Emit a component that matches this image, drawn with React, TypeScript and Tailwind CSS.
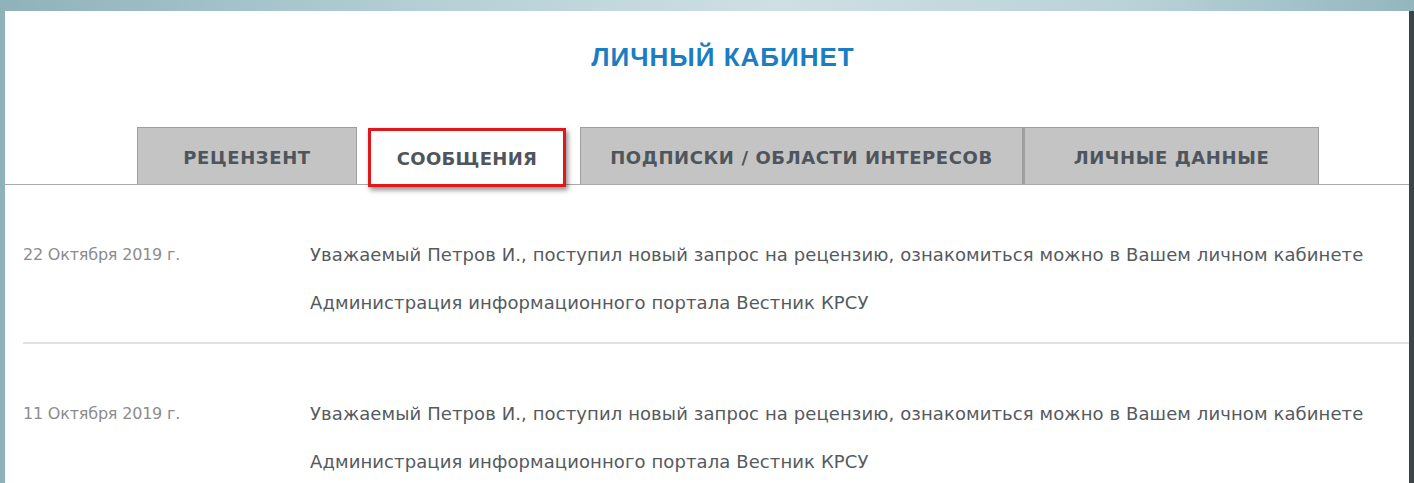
import React from "react";

const tabs = [
  { label: "РЕЦЕНЗЕНТ", width: "w-[220px]", active: false },
  { label: "СООБЩЕНИЯ", width: "w-[198px]", active: true },
  { label: "ПОДПИСКИ / ОБЛАСТИ ИНТЕРЕСОВ", width: "w-[443px]", active: false },
  { label: "ЛИЧНЫЕ ДАННЫЕ", width: "w-[296px]", active: false },
];

const messages = [
  {
    date: "22 Октября 2019 г.",
    text: "Уважаемый Петров И., поступил новый запрос на рецензию, ознакомиться можно в Вашем личном кабинете",
    sign: "Администрация информационного портала Вестник КРСУ",
  },
  {
    date: "11 Октября 2019 г.",
    text: "Уважаемый Петров И., поступил новый запрос на рецензию, ознакомиться можно в Вашем личном кабинете",
    sign: "Администрация информационного портала Вестник КРСУ",
  },
];

export default function App() {
  return (
    <div className="w-[1414px] h-[483px] overflow-hidden flex flex-col bg-[linear-gradient(90deg,#8fb2ba_0%,#b4cfd5_30%,#cde0e4_55%,#b9d2d8_80%,#93b6be_100%)]">
      <div className="h-[11px] shrink-0" />
      <div className="flex flex-1 min-h-0">
        <div className="w-[5px] shrink-0 bg-[#8fb1b9]" />
        <div className="flex-1 bg-white flex flex-col font-['DejaVu_Sans',sans-serif]">
          {/* heading */}
          <div className="h-[117px] shrink-0 flex justify-center pt-[31px] pl-[32px]">
            <h1 className="font-['Liberation_Sans',Arial,sans-serif] font-bold text-[26px] leading-[30px] text-[#1b7dc3] tracking-[1px]">
              ЛИЧНЫЙ КАБИНЕТ
            </h1>
          </div>

          {/* tabs */}
          <div className="flex items-end pl-[132px] border-b border-[#a9a9a9] h-[57px] shrink-0">
            {tabs.map((t, i) =>
              t.active ? (
                <div
                  key={t.label}
                  className={`${t.width} h-[59px] -mb-[3px] ml-[11px] mr-[14px] bg-white border-[3px] border-[#e0171b] shadow-[2px_3px_5px_rgba(0,0,0,0.45)] flex items-center justify-center pt-[2px] relative z-10`}
                >
                  <span className="font-bold text-[18px] text-[#4f555c] tracking-[0.3px]">{t.label}</span>
                </div>
              ) : (
                <div
                  key={t.label}
                  className={`${t.width} h-[57px] bg-[#c4c4c4] border border-[#9e9e9e] border-b-0 ${i === 3 ? "border-l-[2px]" : ""} flex items-center justify-center pt-[3px]`}
                >
                  <span className="font-bold text-[18px] text-[#4f555c] tracking-[0.6px]">{t.label}</span>
                </div>
              )
            )}
          </div>

          {/* messages */}
          <div className="pl-[18px]">
            {messages.map((m, i) => (
              <div
                key={i}
                className={`flex pt-[46px] pb-[15px] ${i === 0 ? "border-b-2 border-[#e2e2e2]" : ""}`}
              >
                <div className="w-[287px] shrink-0 text-[16px] leading-[48px] text-[#8c8c8c] tracking-[-0.2px]">{m.date}</div>
                <div className="text-[18px] leading-[48px] text-[#555a5e] tracking-[0.1px]">
                  <div>{m.text}</div>
                  <div>{m.sign}</div>
                </div>
              </div>
            ))}
          </div>
        </div>
        <div className="w-[5px] shrink-0 bg-[#3a4549]" />
      </div>
    </div>
  );
}
